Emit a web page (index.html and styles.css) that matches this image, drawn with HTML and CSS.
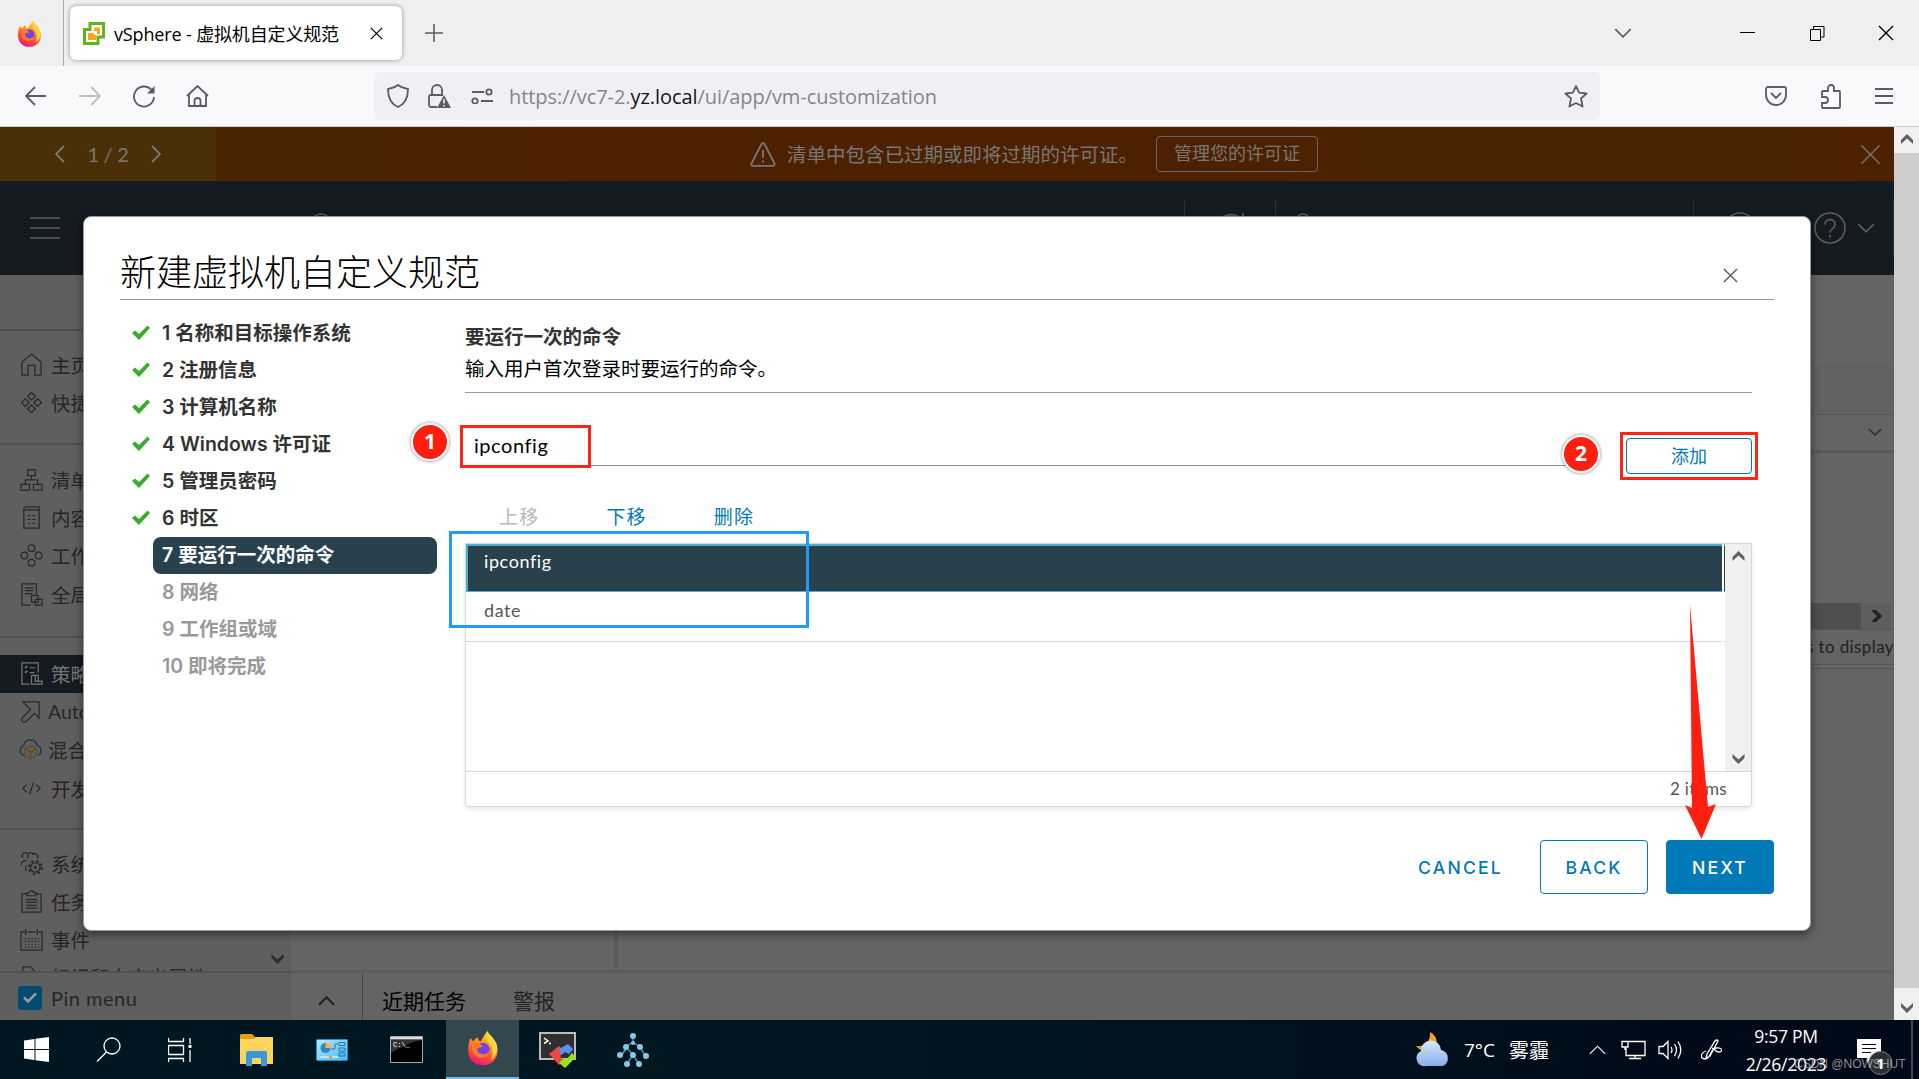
FILE: index.html
```html
<!DOCTYPE html>
<html lang="zh-CN">
<head>
<meta charset="utf-8">
<title>vSphere - 虚拟机自定义规范</title>
<link rel="stylesheet" href="styles.css">
</head>
<body>
<svg class="defs" width="0" height="0">
  <defs>
    <linearGradient id="ffBody" x1="0.7" y1="0" x2="0.3" y2="1"><stop offset="0" stop-color="#ffe14a"/><stop offset=".35" stop-color="#ff9a1f"/><stop offset=".7" stop-color="#ff4a38"/><stop offset="1" stop-color="#e31587"/></linearGradient>
    <linearGradient id="cloudFill" x1="0" y1="0" x2="0" y2="1"><stop offset="0" stop-color="#dbe9fc"/><stop offset="1" stop-color="#86aee8"/></linearGradient>
    <linearGradient id="panelFill" x1="0" y1="0" x2="1" y2="1"><stop offset="0" stop-color="#b5e8ff"/><stop offset="1" stop-color="#4cb6ee"/></linearGradient>
    <symbol id="firefox" viewBox="0 0 34 40">
      <path d="M3 8c1 2 2 3 3 4 1-2 3-4 5-5 0 2 1 4 3 5 2-2 4-7 8-12 1 4 9 8 11 17 3 12-4 22-16 22S0 31 0 21C0 16 1 11 3 8z" fill="url(#ffBody)"/>
      <circle cx="17" cy="21" r="7.5" fill="#7542e5"/>
      <path d="M4 14c5-1 10 1 13 3-2 2-6 1-7 4 2 7 11 7 14 2-2 10-17 10-19-1z" fill="#ff7d20"/>
      <path d="M22 0c1 4 9 8 11 17 1 8-3 13-7 16 3-7 3-15-3-20-2-4-2-9-1-13z" fill="#ffd43a"/>
    </symbol>
    <symbol id="check" viewBox="0 0 20 16"><path d="M1 8l3-2.500 4 3.500 8.500-8.500 2.500 2.500L8 15z" fill="#38ad2b"/></symbol>
    <symbol id="chevUp" viewBox="0 0 16 10"><path d="M1 9l7-7 7 7" fill="none" stroke="currentColor"/></symbol>
    <symbol id="chevDown" viewBox="0 0 16 10"><path d="M1 1l7 7 7-7" fill="none" stroke="currentColor"/></symbol>
    <symbol id="sbUp" viewBox="0 0 14 11"><path d="M1 6l6-6 6 6v4L7 4.500 1 10z" fill="currentColor"/></symbol>
    <symbol id="sbDown" viewBox="0 0 14 11"><path d="M1 5l6 6 6-6V1L7 6.500 1 1z" fill="currentColor"/></symbol>
    <symbol id="cross" viewBox="0 0 16 16"><path d="M1 1l14 14M15 1L1 15" fill="none" stroke="currentColor"/></symbol>
  </defs>
</svg>

<header class="tabstrip">
  <div class="tab-pin"><svg width="23" height="28"><use href="#firefox"/></svg></div>
  <div class="tab">
    <svg width="22" height="23" viewBox="0 0 22 23"><path d="M7 1.500h13.500V15H15v6.500H1.500V7.500H7z" fill="#fff" stroke="#62b51b" stroke-width="3"/><path d="M11 5.500h6V12h-3V9h-3zM5 11h6v2h2v5H5z" fill="#f9a51a"/></svg>
    <span class="tab-title">vSphere - 虚拟机自定义规范</span>
    <svg class="tab-close" width="13" height="13"><use href="#cross"/></svg>
  </div>
  <svg class="new-tab" width="18" height="18" viewBox="0 0 18 18"><path d="M9 0v18M0 9h18" stroke="#5b5b66" stroke-width="1.600"/></svg>
  <div class="window-controls">
    <svg width="18" height="11" class="all-tabs"><use href="#chevDown"/></svg>
    <svg width="16" height="16" viewBox="0 0 16 16" class="win-min"><path d="M0 7.500h15" stroke="#000"/></svg>
    <svg width="15" height="15" viewBox="0 0 15 15" class="win-max"><path d="M.5 3.500h10v11H.5zM3.500 3.500v-3h10.500v10.500h-3.500" fill="none" stroke="#000"/></svg>
    <svg width="16" height="16" class="win-close"><use href="#cross"/></svg>
  </div>
</header>

<nav class="toolbar">
  <div class="nav-buttons">
    <svg width="22" height="20" viewBox="0 0 22 20" class="tb"><path d="M21 10H1M10 1l-9 9 9 9"/></svg>
    <svg width="22" height="20" viewBox="0 0 22 20" class="tb off"><path d="M0 10h20M12 1l9 9-9 9"/></svg>
    <svg width="23" height="23" viewBox="0 0 23 23" class="tb"><path d="M19 5.500A10 10 0 1 0 21 12"/><path d="M21.500 1v7.500H14z" fill="#5b5b66" stroke="none"/></svg>
    <svg width="23" height="23" viewBox="0 0 23 23" class="tb home"><path d="M1 11L11.500 1 22 11M3 10v11h17V10M8.500 21v-5a3 3 0 0 1 6 0v5"/></svg>
  </div>
  <div class="urlbar">
    <svg width="22" height="24" viewBox="0 0 22 24" class="tb"><path d="M11 1c3 2.500 6 3 10 4 0 9-3 15-10 18C4 20 1 14 1 5c4-1 7-1.500 10-4z"/></svg>
    <svg width="23" height="24" viewBox="0 0 23 24" class="tb"><path d="M4 11V6a5 5 0 0 1 10 0v5M9 23H3a2 2 0 0 1-2-2v-8a2 2 0 0 1 2-2h12"/><path d="M16 11l7 13H9z" fill="#5b5b66" stroke="none"/><path d="M16 15v4.500M16 21v1.500" stroke="#f0f0f4" stroke-width="1.600"/></svg>
    <svg width="22" height="16" viewBox="0 0 22 16" class="tb"><path d="M1 4h12M10 13h12"/><circle cx="18" cy="4" r="2.700"/><circle cx="4" cy="13" r="2.700"/></svg>
    <span class="url">https://vc7-2.<b>yz.local</b>/ui/app/vm-customization</span>
    <svg width="24" height="23" viewBox="0 0 24 23" class="tb star"><path d="M12 1l3 6.700 7.600.8-5.600 5 1.600 8L12 18l-6.600 3.500 1.600-8-5.600-5L9 7.700z" stroke-linejoin="round"/></svg>
  </div>
  <div class="toolbar-end">
    <svg width="22" height="20" viewBox="0 0 22 20" class="tb"><path d="M3 1h16a2 2 0 0 1 2 2v6a10 10 0 0 1-20 0V3a2 2 0 0 1 2-2zM6 7l5 5 5-5"/></svg>
    <svg width="22" height="25" viewBox="0 0 22 25" class="tb"><path d="M2 11V8a1 1 0 0 1 1-1h5V4a3 3 0 0 1 6 0v3h5a1 1 0 0 1 1 1v15a1 1 0 0 1-1 1H3a1 1 0 0 1-1-1v-4h3a3 3 0 0 0 0-6H2z"/></svg>
    <svg width="18" height="16" viewBox="0 0 18 16" class="tb"><path d="M0 1h18M0 8h18M0 15h18"/></svg>
  </div>
</nav>

<main class="viewport">
  <div class="app">
    <div class="banner">
      <div class="pager">
        <svg width="10" height="18" viewBox="0 0 10 18"><path d="M9 1L1 9l8 8"/></svg>
        <span>1 / 2</span>
        <svg width="10" height="18" viewBox="0 0 10 18"><path d="M1 1l8 8-8 8"/></svg>
      </div>
      <div class="notice">
        <svg width="26" height="25" viewBox="0 0 26 25"><path d="M11.500 2a1.700 1.700 0 0 1 3 0l10 19.500a1.500 1.500 0 0 1-1.300 2.300H2.800a1.500 1.500 0 0 1-1.300-2.300zM13 8v8M13 18.500v2"/></svg>
        <span class="notice-text">清单中包含已过期或即将过期的许可证。</span>
        <span class="notice-btn">管理您的许可证</span>
      </div>
      <svg class="banner-close" width="21" height="21"><use href="#cross"/></svg>
    </div>
    <div class="appbar">
      <svg width="30" height="22" viewBox="0 0 30 22"><path d="M0 1h30M0 11h30M0 21h30"/></svg>
      <svg width="20" height="20" viewBox="0 0 20 20" class="m-search"><circle cx="10" cy="10" r="9"/></svg>
      <i class="rule r1"></i>
      <svg width="32" height="32" viewBox="0 0 32 32" class="m-refresh"><path d="M27 8A14 14 0 1 0 30 17M28 1v8"/></svg>
      <i class="rule r2"></i>
      <svg width="20" height="20" viewBox="0 0 20 20" class="m-user"><circle cx="10" cy="8" r="7"/></svg>
      <i class="rule r3"></i>
      <svg width="32" height="32" viewBox="0 0 32 32" class="m-smile"><circle cx="16" cy="16" r="15"/></svg>
      <svg width="32" height="32" viewBox="0 0 32 32" class="m-help"><circle cx="16" cy="16" r="15"/><path d="M11 12.500c0-6.500 10-6.500 10 0 0 4-5 4-5 8M16 23v2.500"/></svg>
      <svg width="18" height="11" class="m-chev"><use href="#chevDown"/></svg>
      <i class="rule r4"></i>
    </div>
    <div class="workspace">
      <aside class="sidebar">
        <div class="side-scroll">
          <div class="side-top"></div>
          <div class="group g1">
            <div class="item"><svg viewBox="0 0 24 24"><path d="M2 9.500L12 1l10 8.500V23h-6.500V13h-7v10H2z"/></svg>主页</div>
            <div class="item"><svg viewBox="0 0 24 24"><path d="M12 1.500l4 4-4 4-4-4zM5.500 8l4 4-4 4-4-4zM18.500 8l4 4-4 4-4-4zM12 14.500l4 4-4 4-4-4z"/></svg>快捷</div>
          </div>
          <div class="group g2">
            <div class="item"><svg viewBox="0 0 24 24"><path d="M8 2h8v6H8zM1 17h9v6H1zM14 17h9v6h-9zM12 8v4.500M5.500 17v-4.500h13V17"/></svg>清单</div>
            <div class="item"><svg viewBox="0 0 24 24"><path d="M4 4h16v19H4zM4 4c0-2 1-3 3-3h13v3M8 10h3M13 10h3M8 14h3M13 14h3M8 18h3M13 18h3"/></svg>内容</div>
            <div class="item"><svg viewBox="0 0 24 24"><circle cx="12" cy="4.500" r="3.500"/><circle cx="4.500" cy="12" r="3.500"/><circle cx="19.500" cy="12" r="3.500"/><circle cx="12" cy="19.500" r="3.500"/></svg>工作</div>
            <div class="item"><svg viewBox="0 0 24 24"><path d="M11 23H2V1h15v11M5 5h9M5 8h9M5 11h8M12 13h7v7h-7zM16 17h7v6h-7z"/></svg>全局</div>
          </div>
          <div class="group g3">
            <div class="item active"><svg viewBox="0 0 24 24"><path d="M10 23H2V1h17v10M5 5l1 1 2-2M10 6h6M5 10l1 1 2-2M10 11h5M12 14h7v7M12 14v9h11v-3h-7v-6"/></svg>策略</div>
            <div class="item latin"><svg viewBox="0 0 24 24"><path d="M4 2h17v17l-5-5-8 8c-4 3-7-1-4-4l8-8z"/></svg>Auto</div>
            <div class="item latin"><svg viewBox="0 0 24 24"><path d="M5 18c-5-1-5-8 0-10 1-8 12-8 14 0 5 1 5 8 1 10" stroke="#12344c"/><path d="M12 8l6 3v7l-6 4-6-4v-7zM6 11l6 4 6-4M12 15v7" stroke="#6b4a0d"/></svg>混合</div>
            <div class="item"><svg viewBox="0 0 24 24"><path d="M7 8l-4 4 4 4M17 8l4 4-4 4M14 6l-4 12"/></svg>开发</div>
          </div>
          <div class="group g4">
            <div class="item"><svg viewBox="0 0 24 24"><circle cx="16" cy="16" r="5"/><circle cx="16" cy="16" r="1"/><circle cx="16" cy="16" r="6.800" stroke-width="2" stroke-dasharray="2.600 2.740"/><path d="M3 6a3 3 0 0 1 5-4M9 7a3 3 0 1 1 5-5M13 3a3 3 0 1 1 5 4M1 14c0-4 2-5 6-5M6 14v6"/></svg>系统</div>
            <div class="item"><svg viewBox="0 0 24 24"><path d="M7 4H2v19h20V4h-5M7 6V3h2.500c0-3 5-3 5 0H17v3zM6 10h12M6 13h12M6 16h12M6 19h12"/></svg>任务</div>
            <div class="item"><svg viewBox="0 0 24 24"><path d="M5 4H1v19h22V4h-4M8 4h8M6 1v6M18 1v6"/><path d="M5 11h15M5 14h15M5 17h15M5 20h15" stroke-dasharray="1.500 2"/></svg>事件</div>
            <div class="item tags"><svg viewBox="0 0 24 24"><path d="M3 2h8l11 11-8 9L3 11z"/></svg>标记和自定义属性</div>
          </div>
          <svg class="side-more" width="15" height="11"><use href="#sbDown"/></svg>
        </div>
        <div class="pin">
          <svg width="24" height="24" viewBox="0 0 24 24"><rect width="24" height="24" rx="3" fill="#004b70"/><path d="M6 11.500l4 4 8-8" fill="none" stroke="#999" stroke-width="2.500"/></svg>
          Pin menu
        </div>
      </aside>
      <section class="content">
        <div class="c-body">
          <div class="c-left"></div>
          <div class="c-right">
            <div class="c-tabs"></div>
            <div class="c-head"></div>
            <div class="c-filter"><svg width="14" height="9"><use href="#chevDown"/></svg></div>
            <div class="c-table"></div>
            <div class="c-hscroll"><span><svg width="11" height="14" viewBox="0 0 11 14"><path d="M0 1h5l6 6-6 6H0l6-6z" fill="#222"/></svg></span></div>
            <div class="c-count">s to display</div>
            <div class="c-foot"></div>
          </div>
        </div>
        <div class="tasks">
          <div class="tasks-toggle"><svg width="17" height="11"><use href="#chevUp"/></svg></div>
          <span class="t-active">近期任务</span><span>警报</span>
        </div>
      </section>
    </div>
  </div>
  <div class="page-scroll">
    <div class="ps-up"><svg width="14" height="11"><use href="#sbUp"/></svg></div>
    <div class="ps-down"><svg width="14" height="11"><use href="#sbDown"/></svg></div>
  </div>
</main>

<footer class="taskbar">
  <div class="apps">
    <span class="s"><svg width="25" height="25" viewBox="0 0 25 25"><path d="M0 3.500L10.500 2v10H0zM11.500 1.800L25 0v12H11.500zM0 13h10.500v10L0 21.500zM11.500 13H25v12l-13.500-1.800z" fill="#fff"/></svg></span>
    <span class="s"><svg width="25" height="25" viewBox="0 0 25 25" class="wl"><circle cx="16" cy="9" r="8"/><path d="M10.500 15L1 24.500"/></svg></span>
    <span class="s"><svg width="24" height="24" viewBox="0 0 24 24" class="wl"><path d="M.5 0v3.500h15V0M.5 7.500h15v9H.5zM.5 24v-3.500h15V24M22 0v6M22 12v12"/><path d="M20.500 7h3v3h-3z" fill="#fff" stroke="none"/></svg></span>
    <span class="l"><svg width="33" height="32" viewBox="0 0 33 32"><path d="M0 1.500Q0 0 1.500 0H12l3 3H33v27H0z" fill="#e5a00d"/><path d="M0 5h14l2-2h17v27H0z" fill="#ffd45e"/><path d="M6 32V19q0-2 2-2h17q2 0 2 2v13h-6v-8h-9v8z" fill="#3a96dd"/></svg></span>
    <span class="l"><svg width="32" height="22" viewBox="0 0 32 22"><rect x=".5" y=".5" width="31" height="21" rx="1" fill="url(#panelFill)" stroke="#218fc8"/><circle cx="9.500" cy="9" r="5" fill="#2789ca"/><path d="M9.500 9V3.500A5.500 5.500 0 0 1 15 9z" fill="#ffb32b"/><path d="M15 10h4V5h3M23 3.500h6v3h-6zM23 9h6v3h-6zM23 14h6v3h-6z" fill="none" stroke="#1c78b2"/><path d="M4 18h18" stroke="#fff"/><path d="M13 17h3v2h-3z" fill="#f90"/></svg></span>
    <span class="l"><svg width="33" height="27" viewBox="0 0 33 27"><path d="M.5.500h32v26H.5z" fill="#000" stroke="#aaa"/><path d="M1 1h31v2.500H1z" fill="#ddd"/><path d="M1 4h31C24 5 14 9 1 17z" fill="#333"/><text x="3" y="11" class="cmd-t">C:\_</text></svg></span>
    <span class="l on"><svg width="34" height="35"><use href="#firefox"/></svg></span>
    <span class="l"><svg width="38" height="36" viewBox="0 0 38 36"><path d="M1 1h35v26H1z" fill="#2f2f2f" stroke="#bbb" stroke-width="2"/><path d="M5 6l4 3-4 2.500M10 11.500h2" fill="none" stroke="#fff" stroke-width="1.500"/><path d="M10 22l10-8 6 6-5 4 4 4-5 5z" fill="#ef4646"/><path d="M20 17l9-5 5 5-4 5-4-2-4 3z" fill="#5594f5"/><path d="M20 31l5-5 3 1 5-6 4 4-11 11z" fill="#96e31c"/></svg></span>
    <span class="l"><svg width="32" height="34" viewBox="0 0 32 34"><path d="M16 3v6l-6 4-6 10M16 9l7 5 6 10M10 15l6 7-6 9M16 22l6 9M10 15l-6 8" stroke="#4d87a8" stroke-width="1.500" fill="none"/><g fill="#86c7e4"><circle cx="16" cy="3" r="3"/><circle cx="16" cy="10" r="2"/><circle cx="9" cy="14" r="3"/><circle cx="23" cy="14" r="3"/><circle cx="3" cy="22" r="3"/><circle cx="16" cy="22" r="3"/><circle cx="29" cy="23" r="3"/><circle cx="10" cy="31" r="3"/><circle cx="22" cy="31" r="3"/></g></svg></span>
  </div>
  <div class="tray">
    <svg class="wx" width="36" height="35" viewBox="0 0 36 35"><path d="M15 0c9 5 8 14 2 18-6 3-13 0-16-4 8 1 15-4 14-14z" fill="#f5a022"/><path d="M8 34a8 8 0 0 1-2-15 10 10 0 0 1 20-1 8.500 8.500 0 0 1 2 16z" fill="url(#cloudFill)"/><path d="M10 34a9 7 0 0 1 2-13 9 8 0 0 1 13 4" fill="none" stroke="#a8c5f0"/></svg>
    <span class="wx-t">7°C</span><span class="wx-c">雾霾</span>
    <svg class="t-up wc" width="19" height="11"><use href="#chevUp"/></svg>
    <svg class="t-net wl" width="25" height="20" viewBox="0 0 25 20"><path d="M7 1.500h17v14H5V8M1 1.500h6V7H1zM4 7v3M8 18.500h12M14 15.500v3"/></svg>
    <svg class="t-vol wl" width="24" height="20" viewBox="0 0 24 20"><path d="M1 6.500h4l5-5v17l-5-5H1zM13 7q2 3 0 6M16.500 4q4 6 0 12M20 1.500q5.500 8.500 0 17"/></svg>
    <svg class="t-pen wl" width="21" height="21" viewBox="0 0 21 21"><path d="M6 15L14 2q2-2 3 0L9 17l-4 2zM5 12c-6 2-6 8-1 8 6 0 5-10 11-11 6-1 7 3 4 4-4 1-5-3-8-4"/></svg>
    <div class="clock"><span>9:57 PM</span><span>2/26/2023</span></div>
    <svg class="t-note" width="37" height="37" viewBox="0 0 37 37"><path d="M0 0h24v19H14l-4 5v-5H0z" fill="#fff"/><path d="M5 5.500h14M5 9.500h14M5 13.500h9" stroke="#000a18" stroke-width="1.200"/><circle cx="23.500" cy="24" r="11.500" fill="#2c3035" stroke="#777"/><text x="19" y="30" class="badge-t">1</text></svg>
    <i class="peek"></i>
  </div>
</footer>

<section class="dialog">
  <div class="d-title"><h1>新建虚拟机自定义规范</h1><svg width="15" height="15"><use href="#cross"/></svg></div>
  <div class="d-body">
    <ol class="steps">
      <li><svg><use href="#check"/></svg><span>1 名称和目标操作系统</span></li>
      <li><svg><use href="#check"/></svg><span>2 注册信息</span></li>
      <li><svg><use href="#check"/></svg><span>3 计算机名称</span></li>
      <li><svg><use href="#check"/></svg><span>4 Windows 许可证</span></li>
      <li><svg><use href="#check"/></svg><span>5 管理员密码</span></li>
      <li><svg><use href="#check"/></svg><span>6 时区</span></li>
      <li class="current"><span>7 要运行一次的命令</span></li>
      <li class="todo"><span>8 网络</span></li>
      <li class="todo"><span>9 工作组或域</span></li>
      <li class="todo"><span>10 即将完成</span></li>
    </ol>
    <div class="form">
      <h2>要运行一次的命令</h2>
      <p class="desc">输入用户首次登录时要运行的命令。</p>
      <div class="entry"><div class="field">ipconfig</div><div class="add">添加</div></div>
      <div class="actions"><span class="off">上移</span><span>下移</span><span>删除</span></div>
      <div class="grid">
        <div class="grid-main">
          <div class="rows">
            <div class="row sel"><span>ipconfig</span><i></i></div>
            <div class="row"><span>date</span><i></i></div>
          </div>
          <div class="grid-scroll"><svg width="15" height="11"><use href="#sbUp"/></svg><svg width="15" height="11"><use href="#sbDown"/></svg></div>
        </div>
        <div class="grid-foot">2 items</div>
      </div>
    </div>
  </div>
  <div class="d-foot"><span class="cancel">CANCEL</span><span class="btn">BACK</span><span class="btn primary">NEXT</span></div>
</section>

<div class="mark box-input"></div>
<div class="mark box-add"></div>
<div class="mark box-list"></div>
<div class="dot one">1</div>
<div class="dot two">2</div>
<svg class="arrow" width="34" height="234" viewBox="0 0 34 234"><path d="M6 0l18 202 8-3-14.500 35L1 200l7 3z" fill="#ff1f10"/></svg>
<div class="watermark">CSDN @NOWSHUT</div>
</body>
</html>
```
FILE: styles.css
```css
* { box-sizing: border-box; }
body {
  margin: 0; width: 1919px; height: 1079px; overflow: hidden; position: relative;
  display: flex; flex-direction: column;
  font-family: "Open Sans", "Noto Sans CJK SC", sans-serif;
}
svg { display: block; flex: none; }
i { font-style: normal; }
.defs { position: absolute; }

/* Browser chrome */
.tabstrip { height: 66px; background: #efefef; display: flex; align-items: center; flex: none; }
.tab-pin { width: 64px; height: 66px; border-right: 1px solid #aaa; padding: 20px 0 0 18px; }
.tab {
  width: 332px; height: 54px; margin-left: 6px; padding: 0 19px 0 13px; background: #fff; border-radius: 6px;
  box-shadow: 0 0 4px rgba(0,0,0,.4); display: flex; align-items: center;
}
.tab-title { margin-left: 9px; padding-bottom: 1px; font-size: 18px; white-space: nowrap; letter-spacing: -.15px; }
.tab-close { margin-left: auto; stroke-width: 1.5; }
.new-tab { margin-left: 23px; }
.window-controls { margin-left: auto; display: flex; align-items: center; }
.all-tabs { margin-right: 108px; color: #5b5b66; stroke-width: 1.5; }
.win-min { margin-right: 54px; }
.win-max { margin-right: 53px; }
.win-close { margin-right: 25px; stroke-width: 1.4; }
.toolbar { height: 61px; background: #f9f9fb; border-bottom: 1px solid #ccc; display: flex; align-items: center; flex: none; }
.tb { fill: none; stroke: #5b5b66; stroke-width: 1.8; }
.tb.off { stroke: #bdbdc2; }
.nav-buttons { display: flex; align-items: center; width: 374px; padding-left: 25px; gap: 32px; }
.home { margin-left: -2px; }
.urlbar { width: 1226px; height: 48px; background: #f0f0f4; border-radius: 5px; display: flex; align-items: center; padding: 0 12px 0 13px; }
.urlbar .tb:nth-child(2) { margin-left: 19px; }
.urlbar .tb:nth-child(3) { margin-left: 20px; }
.url { margin-left: 16px; font-size: 20px; color: #85858c; letter-spacing: -.06px; }
.url b { font-weight: 400; color: #15141a; }
.star { margin-left: auto; }
.toolbar-end { display: flex; align-items: center; margin-left: 165px; gap: 33px; }

/* Dimmed application */
.viewport { display: flex; height: 893px; flex: none; }
.app { width: 1894px; display: flex; flex-direction: column; }
.banner { height: 54px; background: linear-gradient(90deg,#4a2300 20%,#4d2100 30%,#4d2100 68%,#4a2300 72%,#4a2300 94%,#4d2100 98%); display: flex; align-items: center; color: #777; stroke: #777; fill: none; }
.banner svg { stroke-width: 1.8; }
.pager { width: 216px; height: 54px; background: #4c3005; display: flex; align-items: center; padding-left: 55px; font-size: 20px; }
.pager span { width: 86px; text-align: center; padding-bottom: 1px; letter-spacing: -.3px; font-family: Lato, sans-serif; }
.notice { display: flex; align-items: center; margin-left: 534px; }
.notice-text { font-size: 19.5px; margin-left: 11px; padding-bottom: 2px; width: 369px; white-space: nowrap; }
.notice-btn { width: 162px; height: 36px; border: 1px solid #666; border-radius: 4px; font-size: 18px; line-height: 33px; text-align: center; }
.banner .banner-close { margin-left: auto; margin-right: 13px; stroke-width: 1; }
.appbar { height: 94px; background: #141b21; display: flex; align-items: center; padding-left: 30px; fill: none; stroke: #5a5e61; stroke-width: 1.6; }
.rule { width: 1px; height: 58px; background: #2b3136; }
.m-search { margin-left: 251px; margin-top: -10px; }
.r1 { margin-left: 853px; }
.m-refresh { margin-left: 30px; }
.r2 { margin-left: 28px; }
.m-user { margin-left: 17px; margin-top: -10px; }
.r3 { margin-left: 380px; }
.m-smile { margin-left: 30px; }
.m-help { margin-left: 58px; }
.m-chev { margin-left: 11px; color: #5a5e61; }
.r4 { margin-left: auto; }
.workspace { display: flex; height: 745px; }
.sidebar { width: 291px; background: #5f5f5f; color: #262626; }
.side-scroll { height: 698px; overflow: hidden; position: relative; border-bottom: 2px solid #515151; }
.side-top { height: 54px; }
.group { border-top: 2px solid #505050; }
.g1 { height: 114px; padding-top: 15px; }
.g2 { height: 193px; padding-top: 16px; }
.g3 { height: 192px; padding-top: 17px; }
.g4 { padding-top: 15px; }
.item { height: 38.4px; display: flex; align-items: center; gap: 8px; padding: 0 0 2px 20px; font-size: 19.5px; white-space: nowrap; }
.item svg { width: 23px; height: 23px; fill: none; stroke: #292929; stroke-width: 1.3; }
.item.active { background: #141b21; color: #777; }
.item.active svg { stroke: #777; }
.item.latin { gap: 6px; font-family: Lato, "Noto Sans CJK SC", sans-serif; }
.g3 .item.latin { padding-left: 19px; }
.item.tags { margin-top: -2px; }
.side-more { position: absolute; right: 6px; bottom: 7px; color: #2c2c2c; }
.pin { height: 47px; display: flex; align-items: center; gap: 9px; padding: 3px 0 0 18px; font: 20px Lato, sans-serif; letter-spacing: .5px; }
.content { width: 1603px; background: #646464; display: flex; flex-direction: column; }
.c-body { height: 698px; display: flex; border-bottom: 3px solid #5c5c5c; }
.c-left { width: 327px; border-right: 4px solid #5c5c5c; }
.c-right { flex: 1; display: flex; flex-direction: column; }
.c-tabs { height: 92px; border-bottom: 1px solid #5f5f5f; }
.c-head { height: 48px; border-bottom: 1px solid #575757; background: #626262; }
.c-filter { height: 38px; border-bottom: 3px solid #595959; display: flex; align-items: center; justify-content: flex-end; padding-right: 12px; color: #333; stroke-width: 2; }
.c-table { height: 150px; }
.c-hscroll { height: 26px; background: #4f4f4f; display: flex; justify-content: flex-end; margin-right: 3px; }
.c-hscroll span { width: 30px; background: #5e5e5e; display: flex; align-items: center; justify-content: center; }
.c-count { height: 36px; border-top: 1px solid #555; border-bottom: 1px solid #555; text-align: right; font: 17px/33px Lato, sans-serif; color: #222; letter-spacing: .4px; }
.c-foot { height: 4px; border-bottom: 1px solid #555; }
.tasks { flex: 1; display: flex; align-items: center; font-size: 21px; color: #222; }
.tasks-toggle { width: 72px; height: 47px; border-right: 1px solid #444; padding: 22px 0 0 27px; color: #222; stroke-width: 2; }
.tasks span { padding-top: 7px; }
.tasks .t-active { margin: 0 47px 0 19px; color: #000; }
.page-scroll { width: 25px; background: #cdcdcd; display: flex; flex-direction: column; justify-content: space-between; color: #606060; }
.ps-up, .ps-down { background: #f0f0f0; display: flex; justify-content: center; }
.ps-up { height: 26px; padding-top: 7px; }
.ps-down { height: 32px; padding-top: 14px; }

/* Windows taskbar */
.taskbar { height: 59px; background: linear-gradient(90deg,#001721,#001720 45%,#00101c 75%,#000a18 88%); display: flex; justify-content: space-between; color: #fff; }
.apps { display: flex; }
.apps span { height: 59px; display: flex; align-items: center; justify-content: center; }
.s { width: 72px; }
.l { width: 75px; }
.s + .l { margin-left: 3px; }
.l.on { width: 73px; margin: 0 1px 0 2px; background: #33474f; border-bottom: 2px solid #76b9ed; }
.wl { fill: none; stroke: #fff; stroke-width: 1.3; }
.cmd-t { font: 7px "Liberation Mono", monospace; fill: #fff; }
.badge-t { font: bold 15px "Open Sans", sans-serif; fill: #fff; }
.tray { width: 504px; display: flex; align-items: center; font-size: 18px; white-space: nowrap; }
.wx-t { width: 32px; margin-left: 13px; font-size: 19px; }
.wx-c { width: 42px; margin-left: 13px; font-size: 20px; }
.t-up { margin-left: 37px; }
.t-net { margin-left: 14px; }
.t-vol { margin-left: 12px; }
.t-pen { margin-left: 19px; }
.clock { width: 100px; margin-left: 14px; display: flex; flex-direction: column; text-align: center; line-height: 28px; font-size: 17.6px; letter-spacing: -.3px; }
.t-note { margin-left: 21px; margin-top: 15px; }
.peek { width: 2px; height: 59px; margin-left: 17px; background: #3e464f; }

/* Wizard dialog */
.dialog {
  position: absolute; left: 83px; top: 216px; width: 1728px; height: 715px; padding: 0 37px; background: #fff;
  border: 1px solid #999; border-radius: 8px; box-shadow: 0 3px 10px rgba(0,0,0,.5);
  font-family: Lato, "Noto Sans CJK SC", sans-serif; color: #000;
}
.d-title { height: 83px; margin: 0 -1px; border-bottom: 1px solid #9a9a9a; display: flex; justify-content: space-between; padding: 27px 36px 0 0; }
.d-title h1 { margin: 0; font-size: 36px; line-height: 56px; font-weight: 300; }
.d-title svg { margin-top: 24px; color: #555; stroke-width: 1.4; }
.d-body { display: flex; height: 508px; }
.steps { list-style: none; margin: 0; padding: 15px 0 0; width: 344px; font-size: 19.5px; font-weight: 700; color: #333; }
.steps li { height: 37px; display: flex; align-items: center; padding-left: 10px; }
.steps li svg { width: 20px; height: 16px; margin-bottom: 2px; }
.steps li span { margin-left: 11px; padding-bottom: 5px; white-space: nowrap; font-family: Inter, "Noto Sans CJK SC", sans-serif; font-weight: 600; }
.steps .current { margin-left: 32px; width: 284px; padding: 0; background: #29404d; color: #fff; border-radius: 8px; }
.steps .current span { margin-left: 9px; }
.steps .todo { padding-left: 30px; color: #999; }
.form { width: 1287px; }
.form h2 { margin: 23px 0 0; font-size: 19.5px; line-height: 28px; color: #333; }
.desc { margin: 0; height: 42px; padding-top: 4px; font-size: 19.5px; line-height: 28px; border-bottom: 1px solid #9a9a9a; }
.entry { height: 81px; display: flex; justify-content: space-between; }
.field { width: 1118px; height: 73px; border-bottom: 1px solid #8c8c8c; padding: 38px 0 0 9px; font-size: 20px; line-height: 28px; letter-spacing: .55px; }
.add { width: 126px; height: 36px; margin-top: 45px; border: 1px solid #0079b8; border-radius: 4px; color: #0079b8; font-size: 18px; line-height: 34px; text-align: center; }
.actions { height: 69px; padding: 29px 0 0 34px; display: flex; gap: 67px; color: #0079b8; font-size: 19px; line-height: 28px; letter-spacing: 1.2px; }
.actions .off { color: #b8b8b8; }
.grid { height: 264px; border: 1px solid #d7d7d7; border-radius: 0 0 4px 4px; box-shadow: 0 2px 4px rgba(0,0,0,.1); color: #565656; font-size: 18px; letter-spacing: .6px; }
.grid-main { height: 228px; display: flex; border-bottom: 1px solid #d7d7d7; }
.rows { width: 1259px; }
.row { height: 49px; display: flex; gap: 2px; line-height: 35px; }
.row span { width: 1256px; padding-left: 18px; border-bottom: 1px solid #d7d7d7; }
.row i { flex: 1; border-bottom: 1px solid #d7d7d7; }
.row.sel span { height: 48px; background: #29404d; border: 1px solid #49afd9; border-width: 2px 0 1px 2px; color: #fff; padding-left: 16px; line-height: 31px; }
.row.sel i { height: 48px; background: #29404d; border-top: 2px solid #49afd9; border-bottom: 1px solid #49afd9; }
.grid-scroll { flex: 1; background: #f0f0f0; color: #606060; display: flex; flex-direction: column; justify-content: space-between; align-items: center; padding: 7px 0; }
.grid-foot { text-align: right; padding-right: 24px; line-height: 33px; font-size: 17px; letter-spacing: .35px; }
.d-foot { display: flex; justify-content: flex-end; align-items: center; padding-top: 32px; margin-right: -1px; color: #0079b8; font: 500 17.6px Inter, sans-serif; letter-spacing: 2.2px; }
.cancel { margin-right: 37px; padding-top: 1px; }
.btn { width: 108px; height: 54px; border: 1px solid #0079b8; border-radius: 4px; text-align: center; line-height: 53px; }
.primary { margin-left: 18px; background: #0079b8; color: #fff; }

/* Annotations over the page */
.mark { position: absolute; border: 3px solid #ff2414; }
.box-input { left: 460px; top: 425px; width: 131px; height: 43px; }
.box-add { left: 1620px; top: 432px; width: 138px; height: 48px; }
.box-list { left: 449px; top: 531px; width: 360px; height: 97px; border-color: #1e9bff; }
.dot {
  position: absolute; width: 38px; height: 38px; border-radius: 50%; border: 2px solid #fff; background: #ff1f10;
  color: #fff; font: bold 21px/32px "Open Sans", sans-serif; text-align: center; box-shadow: 0 0 3px 1px rgba(0,0,0,.3);
}
.one { left: 411px; top: 423px; }
.two { left: 1562px; top: 435px; }
.arrow { position: absolute; left: 1684px; top: 605px; }
.watermark { position: absolute; left: 1794px; top: 1055px; font: 12px/18px "Liberation Sans", sans-serif; color: rgba(190,190,190,.75); white-space: nowrap; }
```
